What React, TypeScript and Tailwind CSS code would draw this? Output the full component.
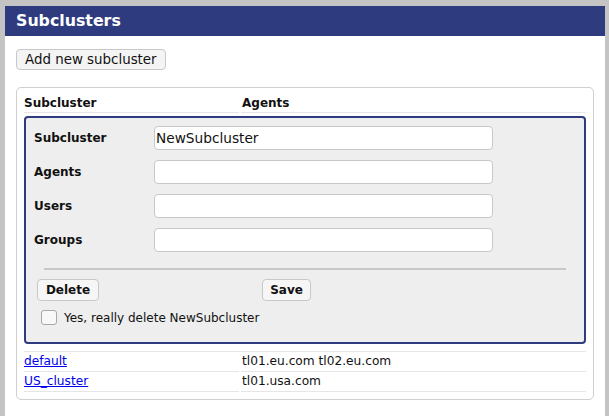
import React from "react";

const font = { fontFamily: '"DejaVu Sans", "Liberation Sans", sans-serif' };

function Field({ label, value }: { label: string; value?: string }) {
  return (
    <div className="flex items-center h-[24px]">
      <div className="w-[120px] ml-[8px] font-bold text-[12px] text-[#111]">{label}</div>
      <input
        defaultValue={value ?? ""}
        className="w-[339px] h-[24px] border border-[#c8c8c8] rounded-[4px] bg-white px-[1px] text-[13.7px] text-[#111] outline-none"
        style={font}
      />
    </div>
  );
}

export default function App() {
  return (
    <div className="min-h-screen bg-[#c4c4c4] pt-[6px] pl-[5px] pr-[4px] text-[#111]" style={font}>
      <div className="bg-white h-[410px]">
        <div className="h-[30px] bg-[#2e3b7e] pl-[11px] flex items-center text-white font-bold text-[15.8px]">
          Subclusters
        </div>
        <div className="px-[11px] pt-[13px] flex flex-col items-start">
          <button
            className="block h-[21px] px-[8px] border border-[#c8c8c8] rounded-[4px] bg-[#f4f4f4] text-[13.4px] leading-none text-[#111]"
            style={font}
          >
            Add new subcluster
          </button>
          <div className="self-stretch mt-[17px] border border-[#cfcfcf] rounded-[5px] px-[7px] pt-[5px] pb-[7px]">
            <div className="grid grid-cols-[215px_1fr] gap-x-[2px]">
              <div className="h-[20px] border-b border-[#e6e6e6] flex items-center font-bold text-[12px]">Subcluster</div>
              <div className="h-[20px] border-b border-[#e6e6e6] flex items-center font-bold text-[12px] pl-[1px]">Agents</div>
            </div>
            <div className="mt-[3px] pb-[7px] border-b border-[#e6e6e6]">
              <div className="border-2 border-[#2e3b7e] rounded-[4px] bg-[#eeeeee] pt-[8px] pb-[17px] flex flex-col">
                <div className="flex flex-col gap-[10px]">
                  <Field label="Subcluster" value="NewSubcluster" />
                  <Field label="Agents" />
                  <Field label="Users" />
                  <Field label="Groups" />
                </div>
                <div className="mt-[16px] mx-[18px] h-[2px] bg-[#c8c8c8]" />
                <div className="mt-[9px] flex items-center ml-[11px]">
                  <button
                    className="block h-[22px] w-[62px] border border-[#c8c8c8] rounded-[4px] bg-[#f6f6f6] font-bold text-[12px] leading-none text-[#111]"
                    style={font}
                  >
                    Delete
                  </button>
                  <button
                    className="block ml-[163px] h-[22px] w-[49px] border border-[#c8c8c8] rounded-[4px] bg-[#f6f6f6] font-bold text-[12px] leading-none text-[#111]"
                    style={font}
                  >
                    Save
                  </button>
                </div>
                <label className="mt-[9px] ml-[15px] h-[15px] flex items-center text-[12px] leading-none">
                  <span className="w-[16px] h-[15px] border border-[#a8a8a8] rounded-[3px] bg-[#f8f8f8] block" />
                  <span className="ml-[7px]">Yes, really delete NewSubcluster</span>
                </label>
              </div>
            </div>
            <div className="grid grid-cols-[215px_1fr] gap-x-[2px] text-[12.2px]">
              <div className="h-[20px] border-b border-[#e6e6e6] flex items-center">
                <a href="#" className="text-[#0000ee] underline">default</a>
              </div>
              <div className="h-[20px] border-b border-[#e6e6e6] flex items-center pl-[1px]">tl01.eu.com tl02.eu.com</div>
              <div className="h-[20px] border-b border-[#e6e6e6] flex items-center">
                <a href="#" className="text-[#0000ee] underline">US_cluster</a>
              </div>
              <div className="h-[20px] border-b border-[#e6e6e6] flex items-center pl-[1px]">tl01.usa.com</div>
            </div>
          </div>
        </div>
      </div>
    </div>
  );
}
